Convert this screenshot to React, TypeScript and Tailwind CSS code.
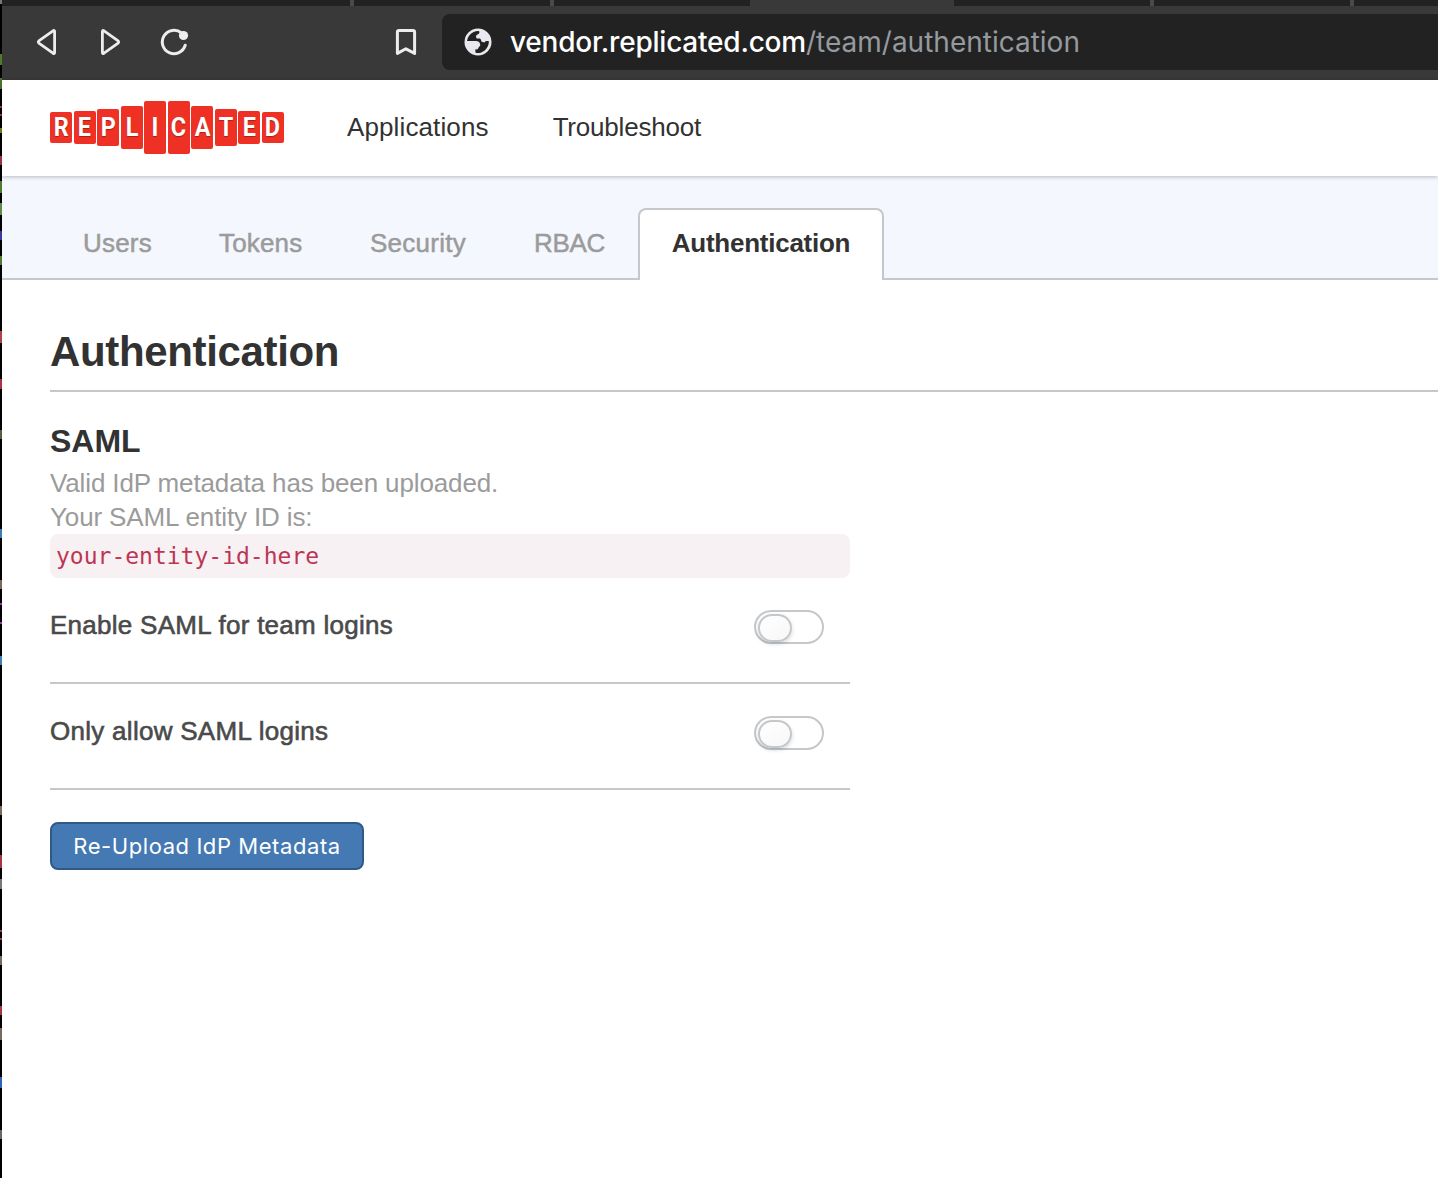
import React from "react";

const tiles = [
  { ch: "R", box: "h-[31px]" },
  { ch: "E", box: "h-[33px]" },
  { ch: "P", box: "h-[37px]" },
  { ch: "L", box: "h-[43px]" },
  { ch: "I", box: "h-[53px]" },
  { ch: "C", box: "h-[53px]" },
  { ch: "A", box: "h-[43px]" },
  { ch: "T", box: "h-[37px]" },
  { ch: "E", box: "h-[33px]" },
  { ch: "D", box: "h-[31px]" },
];

// Slivers of the terminal window showing past the browser's left edge.
const slivers = [
  { y: 0, h: 4, c: "#777777" },
  { y: 54, h: 11, c: "#4d7a2c" },
  { y: 78, h: 11, c: "#4d7a2c" },
  { y: 106, h: 2, c: "#a83246" },
  { y: 114, h: 2, c: "#a83246" },
  { y: 128, h: 5, c: "#7d7d20" },
  { y: 156, h: 9, c: "#a83246" },
  { y: 181, h: 12, c: "#4d7a2c" },
  { y: 203, h: 12, c: "#5d8a44" },
  { y: 231, h: 9, c: "#3a3a9c" },
  { y: 256, h: 9, c: "#4d7a2c" },
  { y: 331, h: 12, c: "#b04050" },
  { y: 379, h: 10, c: "#a83246" },
  { y: 430, h: 9, c: "#5e5a3a" },
  { y: 529, h: 9, c: "#3f7db0" },
  { y: 580, h: 9, c: "#77695c" },
  { y: 603, h: 2, c: "#8f3fa0" },
  { y: 622, h: 2, c: "#8f3fa0" },
  { y: 656, h: 9, c: "#3f7db0" },
  { y: 806, h: 9, c: "#77695c" },
  { y: 855, h: 13, c: "#a83246" },
  { y: 879, h: 10, c: "#777777" },
  { y: 930, h: 2, c: "#a83246" },
  { y: 938, h: 2, c: "#a83246" },
  { y: 956, h: 9, c: "#77695c" },
  { y: 1006, h: 9, c: "#a83246" },
  { y: 1028, h: 12, c: "#77695c" },
  { y: 1077, h: 11, c: "#2f62b8" },
  { y: 1130, h: 9, c: "#666666" },
];

function TabStrip() {
  return (
    <div className="flex h-[6px] bg-[#222222]">
      <div className="ml-[348px] w-[4px] bg-[#4a4a4a]" />
      <div className="ml-[196px] w-[4px] bg-[#4a4a4a]" />
      <div className="ml-[196px] w-[204px] bg-[#393939]" />
      <div className="ml-[196px] w-[4px] bg-[#4a4a4a]" />
      <div className="ml-[196px] w-[4px] bg-[#4a4a4a]" />
    </div>
  );
}

function BrowserBar() {
  return (
    <div className="flex h-[74px] bg-[#393939] pt-2">
      <svg className="ml-[34px] mt-[14px] h-[28px] w-[22px] shrink-0" viewBox="36 28 22 28" fill="none" stroke="#ededed" strokeWidth="2.8" strokeLinejoin="round">
        <path d="M53 30.8Q54.6 29.8 54.6 31.6V52.4Q54.6 54.2 53 53.2L39.2 43.4Q37.4 42 39.2 40.6Z" />
      </svg>
      <svg className="ml-[42px] mt-[14px] h-[28px] w-[22px] shrink-0" viewBox="100 28 22 28" fill="none" stroke="#ededed" strokeWidth="2.8" strokeLinejoin="round">
        <path d="M104 30.8Q102.4 29.8 102.4 31.6V52.4Q102.4 54.2 104 53.2L117.8 43.4Q119.6 42 117.8 40.6Z" />
      </svg>
      <svg className="ml-[38px] mt-[14px] h-[28px] w-[30px] shrink-0" viewBox="160 28 30 28" fill="none" stroke="#ededed" strokeWidth="3" strokeLinecap="round">
        <path d="M181.5 33A11.7 11.7 0 1 0 185.2 45.3" />
        <circle cx="183.5" cy="35.5" r="4.6" fill="#ededed" stroke="none" />
      </svg>
      <svg className="ml-[205px] mt-[14px] h-[28px] w-[22px] shrink-0" viewBox="395 28 22 28" fill="none" stroke="#ededed" strokeWidth="3" strokeLinejoin="round">
        <path d="M399 30.4H412.8Q414.6 30.4 414.6 32.2V53.4L405.9 48.8L397.4 53.4V32.2Q397.4 30.4 399 30.4Z" />
      </svg>
      <div className="ml-[25px] flex h-14 flex-1 items-center rounded-l-lg bg-[#222222] pl-[22px]">
        <svg className="h-7 w-7 shrink-0" viewBox="0 0 28 28">
          <circle cx="14" cy="14" r="13.5" fill="#e8e8ee" />
          <path
            fill="#222222"
            d="M3 12.9C3.6 8.8 6.2 5.4 9.6 4C11.2 3.3 13 3 14.8 3.1C15.6 3.6 15.6 4.8 15 5.5L12.4 7.3C11.8 8.4 12 9.8 12.8 10.6H15.8C17 11 17 12.4 17.6 13.8L20.6 14.4C21.4 13 23 12.6 24.9 13.3C25 18.2 21.8 22.8 17.4 24.4C15.6 25 13.6 25.2 11.6 24.8L11.2 21.6L13.6 21.2C14.6 20.6 14.2 19.4 15.4 18.6C16.8 17.6 16.4 15.6 15.2 14.2C14 12.9 12.6 12.9 11 12.9Z"
          />
        </svg>
        <div className="ml-[18px] whitespace-nowrap font-['Inter'] text-[28px] leading-[56px] text-[#949a9f]">
          <span className="font-medium tracking-[-0.22px] text-white">vendor.replicated.com</span>
          <span>/team/authentication</span>
        </div>
      </div>
    </div>
  );
}

function Logo() {
  return (
    <div className="-mt-[2px] flex h-[53px] w-[234px] items-center justify-between">
      {tiles.map((t, i) => (
        <div key={i} className={"flex w-[22px] items-center justify-center rounded-[2px] bg-[#ee3124] " + t.box}>
          <span className="font-['Roboto'] text-[26px] font-bold leading-[26px] text-white [text-shadow:0_1px_1px_#a52018] [transform:scaleX(0.9)]">{t.ch}</span>
        </div>
      ))}
    </div>
  );
}

function Toggle() {
  return (
    <div className="mr-[26px] flex h-[34px] w-[70px] items-center rounded-full border-2 border-[#c4c8ca] pl-[2px]">
      <div className="mt-[2px] h-[28px] w-[34px] rounded-full border-2 border-[#c4c8ca] bg-linear-to-br from-white to-[#f7f7f7] shadow-[0_2px_4px_rgba(0,0,0,0.15)]" />
    </div>
  );
}

function SettingRow({ label, spacing }: { label: string; spacing: string }) {
  return (
    <div className="flex h-[106px] items-start justify-between border-b-2 border-[#c4c8ca] pt-[32px]">
      <div className={"text-[26px] leading-[30px] text-[#4a4a4a] [-webkit-text-stroke:0.6px_#4a4a4a] " + spacing}>{label}</div>
      <Toggle />
    </div>
  );
}

export default function App() {
  return (
    <div className="relative h-[1178px] w-[1438px] overflow-hidden bg-black pl-[2px] font-['Liberation_Sans',sans-serif]">
      {slivers.map((s) => (
        <div key={s.y} className="absolute left-0 w-[2px]" style={{ top: s.y, height: s.h, background: s.c }} />
      ))}
      <div className="h-full bg-white">
        <TabStrip />
        <BrowserBar />
        <header className="relative flex h-24 items-center bg-white pl-12 text-[26px] text-[#323232] shadow-[0_1px_4px_rgba(0,0,0,0.25)]">
          <Logo />
          <a className="-mt-[2px] ml-[63px] tracking-[0.12px]">Applications</a>
          <a className="-mt-[2px] ml-[64px] tracking-[-0.2px]">Troubleshoot</a>
        </header>
        <nav className="flex h-[104px] items-end bg-[#f4f7fd] text-[26px] leading-[30px] text-[#9b9b9b]">
          <div className="flex h-[72px] w-[636px] border-b-2 border-[#c4c8ca] pt-5 [-webkit-text-stroke:0.5px_#9b9b9b]">
            <a className="ml-[81px] w-[136px] tracking-[0.2px]">Users</a>
            <a className="w-[151px] tracking-[0.15px]">Tokens</a>
            <a className="w-[164px] tracking-[0.25px]">Security</a>
            <a className="tracking-[-0.3px]">RBAC</a>
          </div>
          <div className="h-[72px] w-[246px] rounded-t-lg border-2 border-b-0 border-[#c4c8ca] bg-white pt-[18px] text-center font-bold tracking-[-0.25px] text-[#323232]">
            Authentication
          </div>
          <div className="h-[2px] flex-1 bg-[#c4c8ca]" />
        </nav>
        <main className="pl-12">
          <h1 className="h-[112px] border-b-2 border-[#c4c8ca] pt-[48px] text-[42px] font-bold leading-[48px] tracking-[-0.35px] text-[#323232]">
            Authentication
          </h1>
          <section className="w-[800px]">
            <h2 className="pt-[30px] text-[32px] font-bold leading-[38px] text-[#323232]">SAML</h2>
            <p className="mt-[6px] text-[26px] leading-[34px] tracking-[-0.13px] text-[#9b9b9b]">
              Valid IdP metadata has been uploaded.
              <br />
              Your SAML entity ID is:
            </p>
            <div className="h-[44px] rounded-lg bg-[#f8f1f4] pl-[6px] font-['DejaVu_Sans_Mono',monospace] text-[23px] leading-[44px] text-[#bc3654]">
              your-entity-id-here
            </div>
            <SettingRow label="Enable SAML for team logins" spacing="tracking-[0.27px]" />
            <SettingRow label="Only allow SAML logins" spacing="tracking-[0.28px]" />
            <button className="mt-8 block h-12 w-[314px] rounded-lg border-2 border-[#2f5a88] bg-[#4479b3] font-['Inter'] text-[22px] leading-[44px] tracking-[0.57px] text-white">
              Re-Upload IdP Metadata
            </button>
          </section>
        </main>
      </div>
    </div>
  );
}
